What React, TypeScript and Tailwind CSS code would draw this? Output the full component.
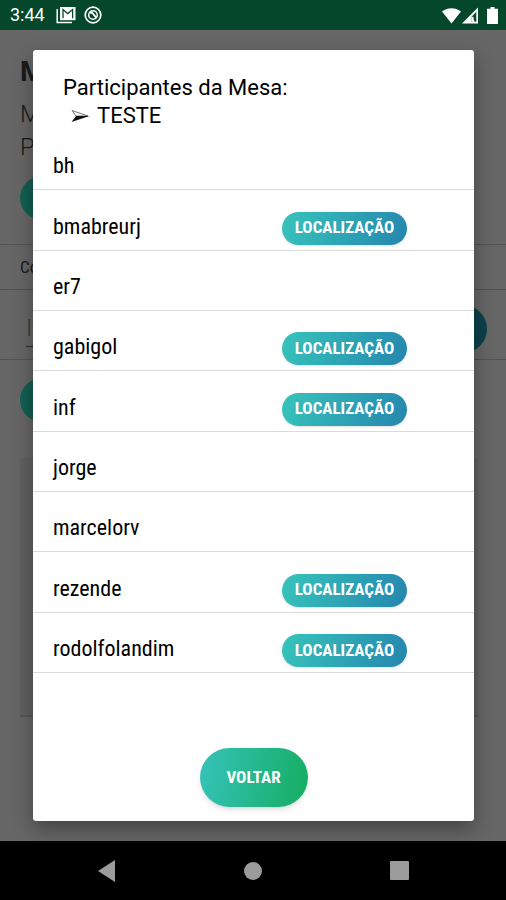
import React from 'react';

interface Participant {
  name: string;
  hasLocation: boolean;
}

const participants: Participant[] = [
  { name: 'bh', hasLocation: false },
  { name: 'bmabreurj', hasLocation: true },
  { name: 'er7', hasLocation: false },
  { name: 'gabigol', hasLocation: true },
  { name: 'inf', hasLocation: true },
  { name: 'jorge', hasLocation: false },
  { name: 'marcelorv', hasLocation: false },
  { name: 'rezende', hasLocation: true },
  { name: 'rodolfolandim', hasLocation: true },
];

function StatusBar() {
  return (
    <header className="h-[30px] shrink-0 bg-[#04472b] text-white flex items-center justify-between pl-[10px] pr-2">
      <div className="flex items-center">
        <span className="w-[46px] text-[18px] leading-[30px]">3:44</span>
        <svg className="w-5 h-[18px]" viewBox="0 0 20 18" fill="none" stroke="currentColor">
          <path d="M1.2 3v13.5H16" strokeWidth="1.5" />
          <path d="M4 1h15.5v13.2H4z" fill="currentColor" stroke="none" />
          <path d="M7 12.2V3.6l4.8 4 4.8-4v8.6" stroke="#04472b" strokeWidth="1.3" />
        </svg>
        <svg className="w-[18px] h-[18px] ml-2" viewBox="0 0 18 18" fill="none" stroke="currentColor">
          <circle cx="9" cy="9" r="7.8" strokeWidth="1.7" />
          <circle cx="9" cy="9" r="4.3" strokeWidth="1.5" />
          <path d="M5.5 6.8c2-.8 3 .2 3.8 1.2l3.2 4" strokeWidth="2" />
        </svg>
      </div>
      <div className="flex items-center">
        <svg className="w-[19px] h-[17px]" viewBox="0 0 19 17" fill="currentColor">
          <path d="M0 4.5C5.5 0 13.5 0 19 4.5L9.5 16.5z" />
        </svg>
        <svg className="w-[17px] h-[17px] ml-px" viewBox="0 0 17 17" fill="currentColor">
          <path fillRule="evenodd" d="M16 .5v16H0zM14.3 4.8L9.6 9.8v4.9h4.7z" />
          <path d="M9.6 9.8l2 .2v2.6l1.2 2.1H9.6z" />
        </svg>
        <svg className="w-[11px] h-[17px] ml-2" viewBox="0 0 11 17" fill="currentColor">
          <path d="M3.5 0h4v1.8H11V17H0V1.8h3.5z" />
        </svg>
      </div>
    </header>
  );
}

// Screen that stays visible, dimmed, around the dialog
function TableScreen() {
  return (
    <div className="flex-1 flex flex-col bg-white text-[#444]" aria-hidden="true">
      <div className="px-5 pt-6 pb-6">
        <p className="text-[28px] leading-9 font-bold">M</p>
        <p className="text-[24px] leading-[33px] mt-2 font-light">M</p>
        <p className="text-[24px] leading-[33px] font-light">P</p>
        <div className="mt-3 w-32 h-11 rounded-full bg-linear-to-r from-[#32f0d0] to-[#2bb57c]" />
      </div>
      <p className="h-[46px] px-5 border-y border-[#ccc] text-[17px] leading-[44px] font-['Roboto_Condensed','Roboto',sans-serif]">Co</p>
      <div className="h-[70px] pt-2 pl-[26px] pr-[19px] border-b border-[#ccc] flex items-center justify-between">
        <p className="w-64 border-b border-[#777] text-[24px] leading-9 font-light text-[#999]">It</p>
        <div className="w-28 h-12 rounded-full bg-linear-to-r from-[#36c2b8] to-[#20a0b9]" />
      </div>
      <div className="mx-5 mt-[18px] w-32 h-11 rounded-full bg-linear-to-r from-[#32f0d0] to-[#2bb57c]" />
      <div className="ml-5 mr-7 mt-9 mb-[124px] flex-1 bg-[#f2f2f2] border-b-2 border-[#d6d6d6]" />
    </div>
  );
}

function ParticipantRow({ name, hasLocation }: Participant) {
  return (
    <li className="flex items-end border-b border-[#dadada] pl-5 pr-[67px]">
      <span className="flex-1 pb-2 text-[22px] leading-[30px]">{name}</span>
      {hasLocation && (
        <button
          type="button"
          aria-label={`LOCALIZAÇÃO ${name}`}
          className="w-[125px] h-[33px] mb-[5px] rounded-full bg-linear-[110deg] from-[#37c4bb] to-[#2586ae] text-white text-[17px] font-bold shadow-sm"
        >
          LOCALIZAÇÃO
        </button>
      )}
    </li>
  );
}

function ParticipantsDialog() {
  return (
    <div
      role="dialog"
      aria-modal="true"
      aria-labelledby="dialog-title"
      className="flex-1 flex flex-col bg-white rounded-[3px] text-black shadow-[0_8px_20px_rgba(0,0,0,0.35)]"
    >
      <h1 id="dialog-title" className="pt-6 pl-[30px] text-[22px] leading-7">
        Participantes da Mesa:
        <span className="flex items-center pl-2">
          <svg className="w-[19px] h-[14px] mr-[7px]" viewBox="0 0 19 14">
            <path d="M1 1.5L17 7H5z" fill="#fff" stroke="#555" strokeWidth=".8" />
            <path d="M5 7h13.5L.5 13z" fill="#111" />
          </svg>
          TESTE
        </span>
      </h1>
      <ul className="flex-1 grid auto-rows-fr font-['Roboto_Condensed','Roboto',sans-serif]">
        {participants.map((p) => (
          <ParticipantRow key={p.name} {...p} />
        ))}
      </ul>
      <div className="flex justify-center pt-[75px] pb-[14px] font-['Roboto_Condensed','Roboto',sans-serif]">
        <button
          type="button"
          className="w-[108px] h-[59px] rounded-full bg-linear-[100deg] from-[#36c3ba] to-[#15ad61] text-white text-[17px] font-bold shadow-md"
        >
          VOLTAR
        </button>
      </div>
    </div>
  );
}

function NavigationBar() {
  return (
    <nav className="h-[59px] shrink-0 bg-black text-[#9b9b9b] grid grid-cols-3 items-center px-[34px]">
      <button type="button" aria-label="Voltar" className="justify-self-center">
        <svg className="w-[18px] h-[22px]" viewBox="0 0 18 22" fill="currentColor">
          <path d="M17 0v22L0 11z" />
        </svg>
      </button>
      <button type="button" aria-label="Início" className="justify-self-center w-[18px] h-[18px] rounded-full bg-current" />
      <button type="button" aria-label="Recentes" className="justify-self-center w-[19px] h-[19px] rounded-[1px] bg-current" />
    </nav>
  );
}

export default function App() {
  return (
    <div className="min-h-screen flex flex-col font-['Roboto',sans-serif]">
      <StatusBar />
      <main className="flex-1 grid">
        <div className="col-start-1 row-start-1 flex">
          <TableScreen />
        </div>
        <div className="col-start-1 row-start-1 z-10 flex bg-black/60 pt-5 pb-5 pl-[33px] pr-8">
          <ParticipantsDialog />
        </div>
      </main>
      <NavigationBar />
    </div>
  );
}
